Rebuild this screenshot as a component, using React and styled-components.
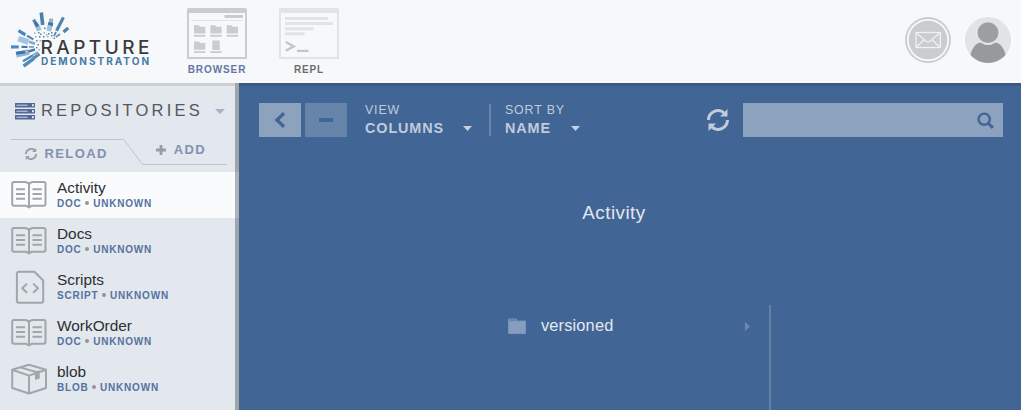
import React from "react";
import styled, { createGlobalStyle } from "styled-components";

const Global = createGlobalStyle`
  *, *::before, *::after { box-sizing: border-box; }
  body { margin: 0; background: #f7f8fa; font-family: "Liberation Sans", Arial, sans-serif; overflow: hidden; }
  svg { display: block; flex: none; }
  button { font: inherit; border: 0; padding: 0; background: none; }
`;

const Page = styled.div`
  display: flex;
  flex-direction: column;
  width: 1021px;
  height: 410px;
`;

const Header = styled.header`
  display: flex;
  flex: none;
  align-items: flex-start;
  height: 83px;
  background: #f7f8fa;
  padding: 8px 10px 0 10px;
`;

const AppNav = styled.nav`
  display: flex;
  gap: 32px;
  margin-left: 37px;
`;

const AppTab = styled.a`
  display: flex;
  flex-direction: column;
  align-items: center;
  width: 60px;
  gap: 4px;
  font-size: 10px;
  line-height: 13px;
  font-weight: bold;
  letter-spacing: ${(p) => (p.$active ? 0.9 : 0.8)}px;
  color: ${(p) => (p.$active ? "#6277a6" : "#6b6d70")};
  white-space: nowrap;
`;

const Account = styled.div`
  display: flex;
  gap: 14px;
  margin: 9px 0 0 auto;
`;

const Body = styled.div`
  display: flex;
  flex: 1;
  min-height: 0;
`;

const Sidebar = styled.aside`
  width: 239px;
  flex: none;
  border-right: 4px solid #a1a5a9;
  background: linear-gradient(#cccfd7 3px, #e3e7ee 3px);
`;

const SideTitle = styled.h1`
  display: flex;
  align-items: center;
  margin: 0;
  height: 56px;
  padding-left: 15px;
  font-size: 16.5px;
  font-weight: normal;
  letter-spacing: 3.2px;
  color: #55585c;
`;

const SideTitleText = styled.span`
  width: 180px;
  padding: 0 0 2px 6px;
`;

const SideActions = styled.div`
  position: relative;
  display: flex;
  height: 33px;
  padding-left: 25px;
`;

const TabOutline = styled.svg`
  position: absolute;
  left: 0;
  top: 0;
`;

const SideAction = styled.button`
  display: flex;
  align-items: center;
  align-self: flex-start;
  height: 15px;
  gap: ${(p) => p.$gap}px;
  margin: ${(p) => p.$top}px 0 0 ${(p) => p.$left}px;
  font-size: 13px;
  font-weight: bold;
  letter-spacing: 1.4px;
  color: #8291b0;
`;

const RepoList = styled.ul`
  list-style: none;
  margin: 0;
  padding: 0;
`;

const RepoRow = styled.li`
  display: flex;
  align-items: center;
  height: 46px;
  padding-left: 10px;
  margin-right: -4px;
  border-right: 4px solid ${(p) => (p.$active ? "#b0b3b5" : "#a1a5a9")};
  background: ${(p) => (p.$active ? "#fafbfd" : "transparent")};
`;

const RepoText = styled.div`
  padding: 0 0 2px 9px;
`;

const RepoName = styled.div`
  font-size: 15.4px;
  line-height: 17px;
  color: #2d2f31;
`;

const RepoMeta = styled.div`
  display: flex;
  margin-top: 1px;
  font-size: 10px;
  line-height: 13px;
  font-weight: bold;
  letter-spacing: 0.8px;
  color: #55729f;
`;

const Dot = styled.i`
  width: 4px;
  height: 4px;
  border-radius: 50%;
  margin: 4px 4px 0 3.5px;
  background: #929599;
`;

const Main = styled.main`
  flex: 1;
  min-width: 0;
  display: flex;
  flex-direction: column;
  background: linear-gradient(#3a5983 3px, #416594 3px);
`;

const Toolbar = styled.div`
  display: flex;
  height: 54px;
  flex: none;
  padding: 20px 18px 0 20px;
`;

const NavButton = styled.button`
  display: flex;
  align-items: center;
  justify-content: center;
  width: 42px;
  height: 34px;
  margin-right: 4px;
  background: ${(p) => (p.$muted ? "#6784aa" : "#8da2bf")};
`;

const Picker = styled.div`
  display: flex;
  flex-direction: column;
  width: ${(p) => p.$width}px;
  color: #c0cbdb;
  margin-left: ${(p) => p.$left}px;
`;

const PickerLabel = styled.span`
  font-size: 12.4px;
  line-height: 14px;
  letter-spacing: 0.85px;
`;

const PickerValue = styled.span`
  display: flex;
  justify-content: space-between;
  align-items: center;
  margin-top: 2px;
  font-size: 14.4px;
  line-height: 18px;
  font-weight: bold;
  letter-spacing: 0.9px;
`;

const Divider = styled.i`
  width: 2px;
  height: 32px;
  margin: 1px 0 0 17px;
  background: #6784aa;
`;

const RefreshButton = styled.button`
  margin: 0 14px 0 auto;
`;

const Search = styled.label`
  display: flex;
  align-items: center;
  justify-content: flex-end;
  width: 260px;
  height: 34px;
  padding-right: 9px;
  background: #8da2bf;
`;

const FolderTitle = styled.h2`
  margin: 65px 0 0;
  padding-right: 32px;
  text-align: center;
  font-size: 18.8px;
  line-height: 22px;
  font-weight: normal;
  letter-spacing: 0.5px;
  color: #e1e7ef;
`;

const Columns = styled.div`
  display: flex;
  flex: 1;
  margin-top: 81px;
`;

const Column = styled.div`
  width: 532px;
  padding-left: 269px;
  border-right: 2px solid #6581a8;
`;

const Entry = styled.div`
  display: flex;
  align-items: center;
  height: 42px;
  padding-right: 19px;
  color: #e4e9f0;
  font-size: 16.4px;
  letter-spacing: 0.15px;
`;

const EntryName = styled.span`
  flex: 1;
  padding: 0 0 1px 15px;
`;

const rays = [
  // x1, y1, x2, y2, thickness, colour
  [41.3, 12.5, 42.7, 25, 3.6, "#4a80b1"],
  [33.6, 19.6, 36.6, 25, 3.4, "#5788b4"],
  [36.5, 24.5, 39.4, 30.5, 5, "#9fbfda"],
  [35.4, 22.5, 37.6, 26.5, 3, "#3f6f9f"],
  [51.2, 18.6, 50.8, 23, 4, "#8db1d1"],
  [50.8, 22.5, 50.2, 26, 5, "#4676a4"],
  [50.2, 25.5, 48.6, 31, 5, "#a3c2dc"],
  [63.4, 17.4, 56.6, 30.8, 3.2, "#5384ac"],
  [68.2, 28, 63.5, 32, 3.2, "#55809f"],
  [18.5, 30.6, 25.4, 34.8, 3.2, "#4486bd"],
  [27, 35.6, 33.3, 39.3, 2, "#5180a8"],
  [18.3, 38.6, 28.5, 42, 5.6, "#a3c3df"],
  [29, 41.7, 35, 43.7, 2.6, "#86abcb"],
  [11, 46.8, 18.8, 47, 3.2, "#468dc8"],
  [21.5, 46.9, 27.5, 47, 2.2, "#4679a6"],
  [29, 46.9, 34, 47, 1.6, "#7097b9"],
  [16.2, 54.8, 29, 52, 5.6, "#8fb4d5"],
  [16.2, 53.2, 25, 52, 3, "#3974ae"],
  [28.5, 51.4, 35, 49.6, 2.6, "#4c7aa4"],
  [23.6, 66.2, 34, 58.4, 3.4, "#4b8cc1"],
  [23, 61.2, 33, 55.2, 2.2, "#4f88b8"],
  [33.5, 58.2, 39.5, 54, 3, "#5b89b0"],
  [33, 55, 38, 52, 1.6, "#7a9fc0"],
  [56, 32, 54, 36, 1.8, "#5f88aa"],
  [60, 34, 56, 37, 1.8, "#6f94b3"],
];
const specks = [
  [34, 32.5], [38, 32], [44, 27.5], [43.5, 32], [48, 33], [51, 32], [35, 36],
  [39, 36], [43, 36], [47, 36], [51, 35], [36, 40], [39.5, 40], [37.5, 44],
  [36, 47], [38.5, 49], [53.5, 37.5], [40, 33.5], [46, 34],
];

function Logo() {
  return (
    <svg width="140" height="66" viewBox="10 8 140 66">
      {rays.map(([x1, y1, x2, y2, w, stroke], i) => (
        <line key={i} x1={x1} y1={y1} x2={x2} y2={y2} strokeWidth={w} stroke={stroke} />
      ))}
      {specks.map(([x, y], i) => (
        <rect key={i} x={x} y={y} width="1.5" height="1.5" fill={i % 3 ? "#5680a5" : "#91b1ca"} />
      ))}
      <text x="40.5" y="53.8" fontFamily="Inter, sans-serif" fontSize="19" fontWeight="500" fill="#3a3b3d" textLength="109" lengthAdjust="spacing">RAPTURE</text>
      <text x="41" y="65" fontFamily="Inter, sans-serif" fontSize="10" fontWeight="700" fill="#467aa5" textLength="108" lengthAdjust="spacing">DEMONSTRATON</text>
    </svg>
  );
}

const Folder = ({ x, y }) => (
  <g>
    <path d={`M${x} ${y}h5l1 1.5h5.3v6.7h-11.3z`} />
    <rect x={x} y={y + 9.6} width="11.3" height="1.9" />
  </g>
);

function BrowserIcon() {
  return (
    <svg width="60" height="51" viewBox="0 0 60 51" fill="#cacccf">
      <path fillRule="evenodd" d="M1.5 0h57a1.5 1.5 0 0 1 1.5 1.5v49.5H0V1.5A1.5 1.5 0 0 1 1.5 0zM2 5v44h56V5z" />
      <rect x="37.5" y="7" width="18.5" height="3" />
      <rect x="4" y="12" width="52" height="1" fill="#e2e4e7" />
      <Folder x={7} y={17.3} />
      <Folder x={23.3} y={17.3} />
      <Folder x={39.7} y={17.3} />
      <Folder x={7} y={33.5} />
      <rect x="25.3" y="32.5" width="7.5" height="9.5" />
      <rect x="23.3" y="43.1" width="11.3" height="1.9" />
    </svg>
  );
}

function ReplIcon() {
  return (
    <svg width="60" height="51" viewBox="0 0 60 51" fill="#e1e3e5">
      <path fillRule="evenodd" d="M1.5 0h57a1.5 1.5 0 0 1 1.5 1.5v49.5H0V1.5A1.5 1.5 0 0 1 1.5 0zM2 5v44h56V5z" />
      <rect x="6" y="9" width="43" height="3" />
      <rect x="6" y="14" width="48" height="3" />
      <rect x="6" y="19.3" width="28.5" height="3" />
      <rect x="6" y="24.3" width="19.5" height="3" />
      <path d="M6.7 34l8 4.4-8 4.4" fill="none" stroke="#c3c5c7" strokeWidth="2.4" />
      <rect x="18" y="41.8" width="11.5" height="2.2" fill="#c3c5c7" />
    </svg>
  );
}

function MailIcon() {
  return (
    <svg width="46" height="46" viewBox="0 0 46 46" fill="none">
      <circle cx="23" cy="23" r="23" fill="#cbcccf" />
      <circle cx="23" cy="23" r="20.2" stroke="#f7f8fa" strokeWidth="1.8" />
      <g stroke="#f0f1f3" strokeWidth="1.3">
        <rect x="11" y="15.5" width="24.3" height="15" />
        <path d="M11.5 16l10 8.4q1.5 1.2 3 0l10.3-8.4M11.5 30l8-7.4M34.8 30l-8-7.4" />
      </g>
    </svg>
  );
}

function Avatar() {
  return (
    <svg width="46" height="46" viewBox="0 0 46 46">
      <defs>
        <clipPath id="face"><circle cx="23" cy="23" r="23" /></clipPath>
      </defs>
      <g clipPath="url(#face)">
        <rect width="46" height="46" fill="#e2e3e5" />
        <path d="M4 46C5 35 9 26 16 25.5Q23 30.5 30 25.5C37 26 41 35 42 46z" fill="#97999b" />
        <circle cx="23" cy="15.7" r="11.2" fill="#9c9ea0" stroke="#e2e3e5" strokeWidth="1.6" />
      </g>
    </svg>
  );
}

const ServerIcon = () => (
  <svg width="20" height="17" viewBox="0 0 20 17">
    {[0, 6, 12].map((y) => (
      <g key={y}>
        <rect y={y} width="20" height="4.5" fill="#53689a" />
        <rect x="1.5" y={y + 1.6} width="11" height="1.4" fill="#a9b5cd" />
        <rect x="17" y={y + 1.2} width="1.8" height="2" fill="#e9edf4" />
      </g>
    ))}
  </svg>
);

const Caret = ({ width, height, color }) => (
  <svg width={width} height={height} viewBox="0 0 10 6" preserveAspectRatio="none">
    <path d="M0 0h10L5 6z" fill={color} />
  </svg>
);

const RefreshIcon = ({ size, color, stroke }) => (
  <svg width={size} height={size} viewBox="0 0 22 22">
    <path d="M1.5 11A9.5 9.5 0 0 1 17.6 4.3M20.5 11A9.5 9.5 0 0 1 4.4 17.7" fill="none" stroke={color} strokeWidth={stroke} />
    <path d="M20.5 0v7.5h-7.5zM1.5 22v-7.5h7.5z" fill={color} />
  </svg>
);

const PlusIcon = () => (
  <svg width="10" height="10" viewBox="0 0 10 10">
    <path d="M5 0v10M0 5h10" stroke="#999da3" strokeWidth="2.8" />
  </svg>
);

const repoDrawings = {
  doc: (
    <>
      <path d="M19 5.8Q17 4 15 4H4Q2.2 4 2.2 5.8V26Q2.2 27.8 4 27.8H16.3L19 29.5 21.5 27.8H33.7Q35.5 27.8 35.5 26V5.8Q35.5 4 33.7 4H22.8Q20.8 4 19 5.8V29" />
      <path d="M6 11.2h9M6 16h9M6 20.8h9M22.5 11.2h9.3M22.5 16h9.3M22.5 20.8h9.3" />
    </>
  ),
  script: (
    <>
      <path d="M8.5 1.7H24.5L33.2 10.5V31Q33.2 32.8 31.2 32.8H8.9Q6.9 32.8 6.9 31V3.7Q6.9 1.7 8.9 1.7z" />
      <path d="M17 13.6l-4.8 4.6 4.8 4.6M23.2 13.6l4.8 4.6-4.8 4.6" />
    </>
  ),
  blob: (
    <>
      <path d="M2.2 7.8L19 2.8 36 7.8V26L19 31.5 2.2 26zM2.2 7.8L19 13.6 36 7.8M19 13.6V31.2" />
      <path d="M10.5 5.4L27 10.2" />
      <path d="M25 9.8L29.7 8.3V16.5L25 18z" fill="#a2a5a9" stroke="none" />
    </>
  ),
};

const RepoIcon = ({ kind }) => (
  <svg width="38" height="34" viewBox="0 0 38 34" fill="none" stroke="#a2a5a9" strokeWidth="2" strokeLinejoin="round">
    {repoDrawings[kind]}
  </svg>
);

const repos = [
  { name: "Activity", kind: "doc", active: true },
  { name: "Docs", kind: "doc" },
  { name: "Scripts", kind: "script" },
  { name: "WorkOrder", kind: "doc" },
  { name: "blob", kind: "blob" },
];

export default function App() {
  return (
    <>
      <Global />
      <Page>
        <Header>
          <Logo />
          <AppNav>
            <AppTab $active><BrowserIcon />BROWSER</AppTab>
            <AppTab><ReplIcon />REPL</AppTab>
          </AppNav>
          <Account><MailIcon /><Avatar /></Account>
        </Header>
        <Body>
          <Sidebar>
            <SideTitle>
              <ServerIcon />
              <SideTitleText>REPOSITORIES</SideTitleText>
              <Caret width={10} height={5} color="#a5b1c6" />
            </SideTitle>
            <SideActions>
              <TabOutline width="235" height="33" fill="none" stroke="#bfc4cd">
                <path d="M11 .5H124L142.5 25.5H227" />
              </TabOutline>
              <SideAction $gap={7.5} $top={7} $left={0}>
                <RefreshIcon size={12} color="#9b9fa6" stroke={3.4} />RELOAD
              </SideAction>
              <SideAction $gap={8} $top={3} $left={48}>
                <PlusIcon />ADD
              </SideAction>
            </SideActions>
            <RepoList>
              {repos.map((r) => (
                <RepoRow key={r.name} $active={r.active}>
                  <RepoIcon kind={r.kind} />
                  <RepoText>
                    <RepoName>{r.name}</RepoName>
                    <RepoMeta>{r.kind.toUpperCase()}<Dot />UNKNOWN</RepoMeta>
                  </RepoText>
                </RepoRow>
              ))}
            </RepoList>
          </Sidebar>
          <Main>
            <Toolbar>
              <NavButton aria-label="Back">
                <svg width="12" height="16" viewBox="0 0 12 16">
                  <path d="M10 1.3L3 8l7 6.7" fill="none" stroke="#416594" strokeWidth="3.4" />
                </svg>
              </NavButton>
              <NavButton $muted aria-label="Collapse">
                <svg width="14" height="4" viewBox="0 0 14 4"><rect width="14" height="4" fill="#416594" /></svg>
              </NavButton>
              <Picker $width={107} $left={14}>
                <PickerLabel>VIEW</PickerLabel>
                <PickerValue>COLUMNS<Caret width={9} height={5} color="#c6d0de" /></PickerValue>
              </Picker>
              <Divider />
              <Picker $width={75} $left={14}>
                <PickerLabel>SORT BY</PickerLabel>
                <PickerValue>NAME<Caret width={9} height={5} color="#c6d0de" /></PickerValue>
              </Picker>
              <RefreshButton aria-label="Refresh"><RefreshIcon size={22} color="#c0ccdb" stroke={3} /></RefreshButton>
              <Search>
                <svg width="17" height="17" viewBox="0 0 17 17" fill="none" stroke="#416594">
                  <circle cx="7.2" cy="7.2" r="5.6" strokeWidth="2.4" />
                  <path d="M11.3 11.3l4.6 4.6" strokeWidth="3" />
                </svg>
              </Search>
            </Toolbar>
            <FolderTitle>Activity</FolderTitle>
            <Columns>
              <Column>
                <Entry>
                  <svg width="18" height="16" viewBox="0 0 18 16">
                    <path d="M0 1.5Q0 .5 1 .5H8Q9 .5 9 1.5V2.5H17Q18 2.5 18 3.5V15Q18 16 17 16H1Q0 16 0 15z" fill="#7591b4" />
                    <rect x="0.7" y="3.5" width="16.6" height="12" fill="#859dbe" />
                    <path d="M1.5 2h6" stroke="#5b7ba5" />
                  </svg>
                  <EntryName>versioned</EntryName>
                  <svg width="5" height="9" viewBox="0 0 5 9"><path d="M0 0l5 4.5L0 9z" fill="#6c88af" /></svg>
                </Entry>
              </Column>
            </Columns>
          </Main>
        </Body>
      </Page>
    </>
  );
}
